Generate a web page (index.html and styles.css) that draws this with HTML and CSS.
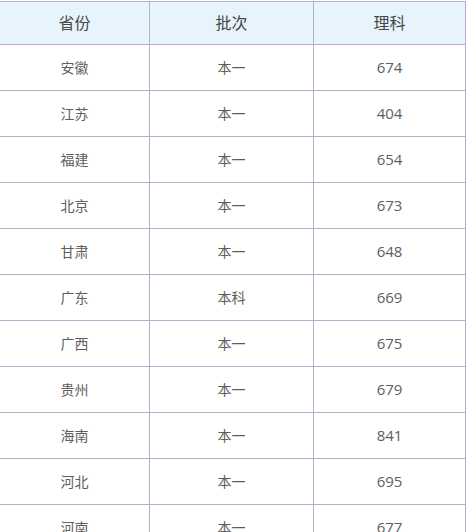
FILE: index.html
```html
<!DOCTYPE html>
<html lang="zh-CN">
<head>
<meta charset="utf-8">
<title>省份批次理科</title>
<link rel="stylesheet" href="styles.css">
</head>
<body>
<table class="scores">
  <colgroup>
    <col class="c-prov">
    <col class="c-batch">
    <col class="c-sci">
  </colgroup>
  <thead>
    <tr class="head-row"><th>省份</th><th>批次</th><th>理科</th></tr>
  </thead>
  <tbody>
    <tr><td>安徽</td><td>本一</td><td class="num">674</td></tr>
    <tr><td>江苏</td><td>本一</td><td class="num">404</td></tr>
    <tr><td>福建</td><td>本一</td><td class="num">654</td></tr>
    <tr><td>北京</td><td>本一</td><td class="num">673</td></tr>
    <tr><td>甘肃</td><td>本一</td><td class="num">648</td></tr>
    <tr><td>广东</td><td>本科</td><td class="num">669</td></tr>
    <tr><td>广西</td><td>本一</td><td class="num">675</td></tr>
    <tr><td>贵州</td><td>本一</td><td class="num">679</td></tr>
    <tr><td>海南</td><td>本一</td><td class="num">841</td></tr>
    <tr><td>河北</td><td>本一</td><td class="num">695</td></tr>
    <tr><td>河南</td><td>本一</td><td class="num">677</td></tr>
  </tbody>
</table>
</body>
</html>
```
FILE: styles.css
```css
html, body {
  margin: 0;
  padding: 0;
  background: #ffffff;
}
body {
  padding-top: 1px;
  font-family: "Open Sans", "Noto Sans CJK SC", sans-serif;
  overflow: hidden;
}
.scores {
  width: 466px;
  table-layout: fixed;
  border-collapse: separate;
  border-spacing: 0;
  border-top: 1px solid #b3aece;
}
.c-prov { width: 150px; }
.c-batch { width: 164px; }
.c-sci { width: 152px; }
.scores th,
.scores td {
  padding: 0 0 2px 0;
  text-align: center;
  vertical-align: middle;
  border-right: 1px solid #b3aece;
  border-bottom: 1px solid #b3aece;
}
.head-row {
  height: 43px;
  background: #e8f4fc;
}
.scores th {
  font-weight: normal;
  font-size: 16px;
  color: #474747;
}
.scores tbody tr {
  height: 46px;
}
.scores td {
  font-size: 14px;
  color: #5e5e5e;
}
.scores td.num {
  font-size: 15px;
}
```
